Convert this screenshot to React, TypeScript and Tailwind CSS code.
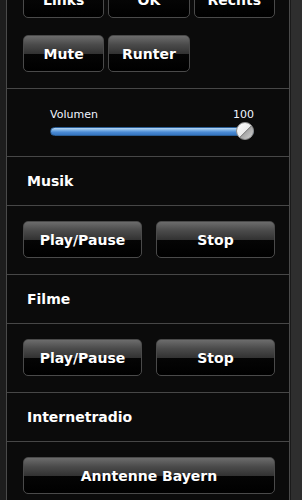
import React from "react";

const font = { fontFamily: '"DejaVu Sans", Verdana, sans-serif' };

function Btn({ label, className = "" }: { label: string; className?: string }) {
  return (
    <div
      className={
        "h-[37px] flex items-center justify-center rounded-[5px] border border-[#4a4a4a] text-white font-bold text-[14px] pt-[1px] bg-[linear-gradient(to_bottom,#6c6c6c_0%,#4a4a4a_25%,#333333_50%,#050505_51%,#000000_100%)] [text-shadow:0_1px_0_#000] " +
        className
      }
    >
      {label}
    </div>
  );
}

function Header({ text }: { text: string }) {
  return (
    <div className="shrink-0 h-[49px] flex items-center pl-5 border-b border-[#474747] text-white font-bold text-[14px]">
      {text}
    </div>
  );
}

function Thumb() {
  return (
    <svg width="18" height="18" viewBox="0 0 18 18">
      <defs>
        <linearGradient id="tg" x1="0" y1="0" x2="1" y2="1">
          <stop offset="0" stopColor="#ffffff" />
          <stop offset="0.5" stopColor="#ececec" />
          <stop offset="0.5" stopColor="#7a7a7a" />
          <stop offset="0.58" stopColor="#a8a8a8" />
          <stop offset="1" stopColor="#d8d8d8" />
        </linearGradient>
      </defs>
      <circle cx="9" cy="9" r="8.5" fill="url(#tg)" stroke="#8a8a8a" strokeWidth="1" />
    </svg>
  );
}

export default function App() {
  return (
    <div className="w-[302px] h-[500px] overflow-hidden flex bg-[#222222]" style={font}>
      <div className="w-[6px] bg-[#1d1d1d]" />
      <div className="w-[284px] border-l border-r border-[#4a4a4a] bg-[#0b0b0b] flex flex-col">
        <div className="shrink-0 -mt-[19px] pl-4 pr-[14px] pb-[16px] border-b border-[#474747] flex flex-col gap-[17px]">
          <div className="grid grid-cols-3 gap-[4px]">
            <Btn label="Links" />
            <Btn label="OK" />
            <Btn label="Rechts" />
          </div>
          <div className="grid grid-cols-3 gap-[4px]">
            <Btn label="Mute" />
            <Btn label="Runter" />
          </div>
        </div>
        <div className="shrink-0 h-[68px] border-b border-[#474747] pt-[19px] pl-[43px] pr-[35px]">
          <div className="flex justify-between text-[11px] leading-[13px] text-[#f0f4ff]">
            <span>Volumen</span>
            <span>100</span>
          </div>
          <div className="relative h-[18px] mt-[1px] flex items-center">
            <div className="w-full h-[9px] rounded-full border border-[#2a5d94] bg-[linear-gradient(to_bottom,#b9d8f5_0%,#7db2e6_30%,#4a8ad4_60%,#3574bf_100%)]" />
            <div className="absolute right-0 top-0">
              <Thumb />
            </div>
          </div>
        </div>
        <Header text="Musik" />
        <div className="shrink-0 h-[69px] border-b border-[#474747] pt-[15px] pl-4 pr-[14px]">
          <div className="grid grid-cols-2 gap-[14px]">
            <Btn label="Play/Pause" />
            <Btn label="Stop" />
          </div>
        </div>
        <Header text="Filme" />
        <div className="shrink-0 h-[69px] border-b border-[#474747] pt-[15px] pl-4 pr-[14px]">
          <div className="grid grid-cols-2 gap-[14px]">
            <Btn label="Play/Pause" />
            <Btn label="Stop" />
          </div>
        </div>
        <Header text="Internetradio" />
        <div className="shrink-0 h-[69px] pt-[15px] pl-4 pr-[14px]">
          <Btn label="Anntenne Bayern" />
        </div>
      </div>
      <div className="w-[12px] bg-[#2e2e2e] border-l border-[#1a1a1a]" />
    </div>
  );
}
